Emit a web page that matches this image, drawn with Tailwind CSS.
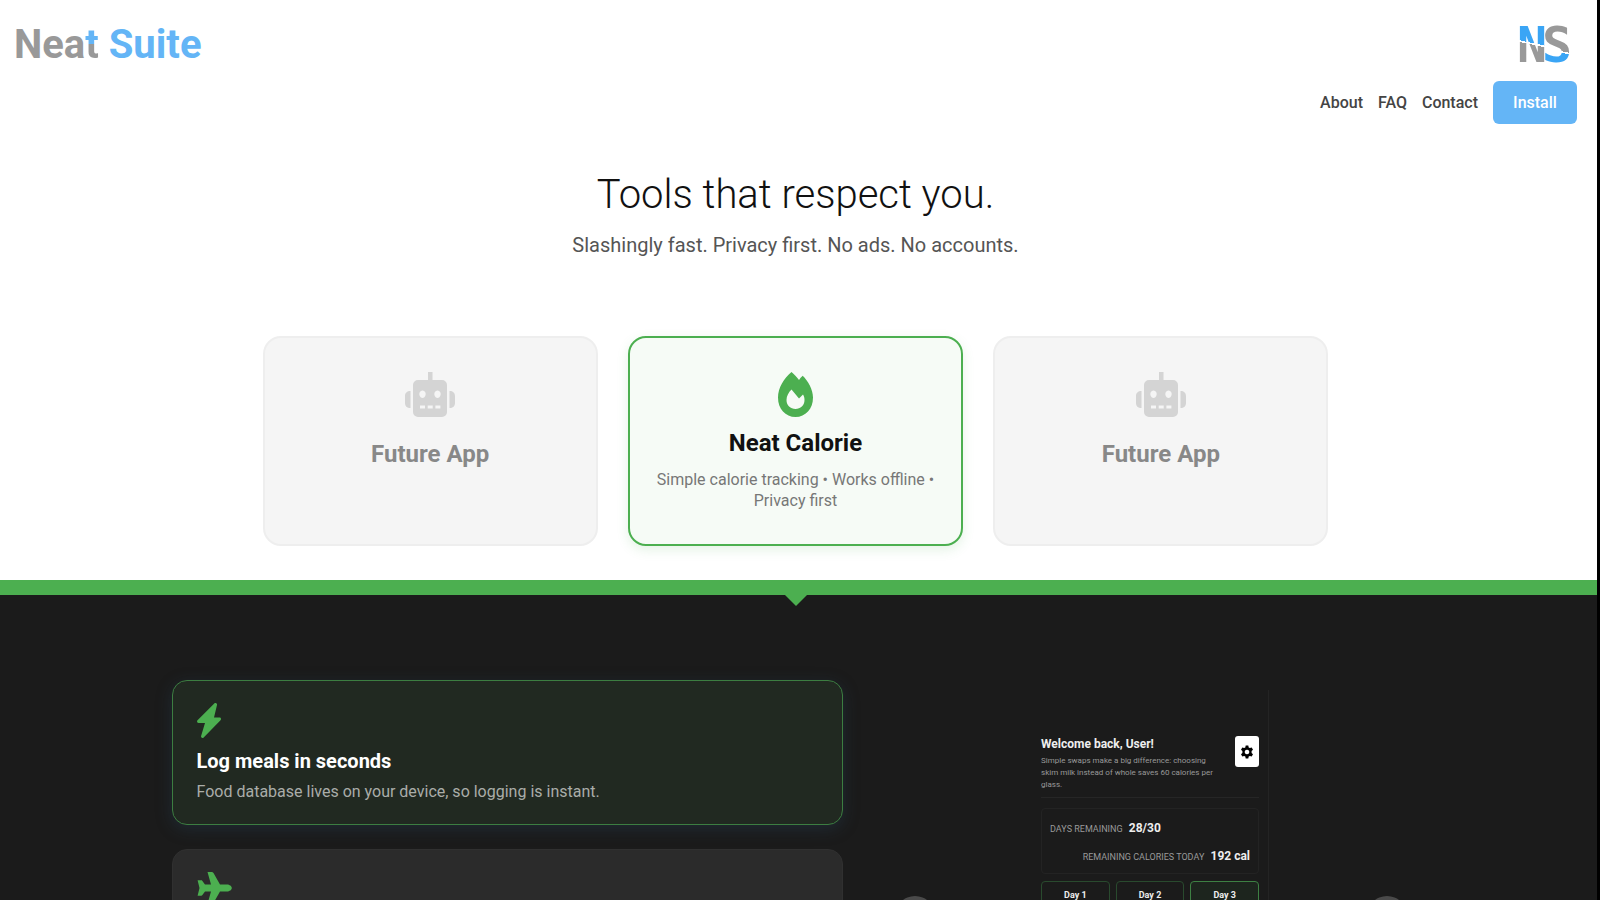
<!DOCTYPE html>
<html lang="en">
<head>
<meta charset="UTF-8" />
<meta name="viewport" content="width=device-width, initial-scale=1.0" />
<title>Neat Suite</title>
<script src="https://cdn.jsdelivr.net/npm/@tailwindcss/browser@4"></script>
</head>
<body class="h-screen overflow-hidden bg-black pr-[3px] font-[Roboto,'Liberation_Sans',sans-serif]">

<div class="min-h-full bg-white pr-[6px]">

  <!-- Header -->
  <header class="flex items-start justify-between pl-[14px] pr-[14px] pt-[25px]">
    <a href="#" class="text-[40px] leading-10 font-bold text-[#999999]">Nea<span class="bg-linear-to-b from-[#64b5f6] from-48% to-[#999999] to-48% bg-clip-text text-transparent">t</span> <span class="text-[#64b5f6]">Suite</span></a>
    <div class="flex flex-col items-end">
      <a href="#" aria-label="Neat Suite home" class="mr-[6px]">
        <svg class="w-[52px] h-10 overflow-visible" viewBox="0 0 52 40">
          <defs>
            <linearGradient id="n-fill" gradientUnits="userSpaceOnUse" x1="25" y1="1" x2="17" y2="39">
              <stop offset=".49" stop-color="#3aa5f5" />
              <stop offset=".49" stop-color="#fff" />
              <stop offset=".53" stop-color="#fff" />
              <stop offset=".53" stop-color="#999" />
            </linearGradient>
            <linearGradient id="s-fill" gradientUnits="userSpaceOnUse" x1="25" y1="1" x2="17" y2="39">
              <stop offset=".54" stop-color="#999" />
              <stop offset=".54" stop-color="#fff" />
              <stop offset=".58" stop-color="#fff" />
              <stop offset=".58" stop-color="#3aa5f5" />
            </linearGradient>
          </defs>
          <text x="-2" y="37" font-family="DejaVu Sans Mono, monospace" font-weight="700" font-size="50" fill="url(#n-fill)">N</text>
          <text x="23" y="37" font-family="DejaVu Sans Mono, monospace" font-weight="700" font-size="50" fill="url(#s-fill)">S</text>
        </svg>
      </a>
      <nav class="mt-4 flex items-center gap-[15px] text-base font-medium text-[#444]">
        <a href="#about">About</a>
        <a href="#faq">FAQ</a>
        <a href="#contact">Contact</a>
        <button class="h-[43px] w-[84px] rounded-md bg-[#64b5f6] text-white">Install</button>
      </nav>
    </div>
  </header>

  <!-- Hero -->
  <section class="pt-[43px] text-center">
    <h1 class="text-[40px] leading-[56px] font-light text-[#111]">Tools that respect you.</h1>
    <p class="mt-2 text-xl leading-7 text-[#555]">Slashingly fast. Privacy first. No ads. No accounts.</p>
  </section>

  <!-- Apps -->
  <section class="mx-auto mt-[77px] grid w-[67%] max-w-[1066px] grid-cols-3 gap-[30px] text-center">
    <div class="flex flex-col items-center rounded-[18px] border-2 border-[#eeeeee] bg-[#f5f5f5] pt-[34px]">
      <svg class="w-[50px] h-[45px] fill-[#d4d4d4]" viewBox="0 0 50 45">
        <path fill-rule="evenodd" d="M23 0h4.500v8H37a5 5 0 0 1 5 5v27a5 5 0 0 1-5 5H13a5 5 0 0 1-5-5V13a5 5 0 0 1 5-5h10zM17.500 18.500a3.200 3.700 0 1 0 .01 0zM32.500 18.500a3.200 3.700 0 1 0 .01 0zM15 33.500v3h5v-3zM22.700 33.500v3h5v-3zM30.400 33.500v3h5v-3z" />
        <path d="M5.500 19v17C2 36 0 34 0 31v-7c0-3 2-5 5.500-5zM44.500 19v17c3.500 0 5.500-2 5.500-5v-7c0-3-2-5-5.500-5z" />
      </svg>
      <h2 class="mt-[21px] text-[24px] leading-8 font-bold text-[#888]">Future App</h2>
    </div>
    <div class="flex flex-col items-center rounded-[18px] border-2 border-[#4caf50] bg-[#f6fbf6] px-5 pt-[34px] pb-[33px] shadow-[0_4px_12px_rgba(76,175,80,0.15)]">
      <svg class="w-[35px] h-[45px] fill-[#4caf50]" viewBox="0 0 35 45">
        <path fill-rule="evenodd" d="M13.500 0c3 2.500 5.500 5.500 7.500 8 1-1.600 2.200-3 3.700-4.200C30 9 35 17.500 35 25.500 35 37 27.500 45 17.500 45S0 37 0 25.500C0 16 6 6 13.500 0zM13.500 17.500C10.500 20.500 8.500 24 8.500 28c0 5.500 4 9 9 9s9-3.500 9-9c0-2-.5-4-1.500-5.500l-4 4z" />
      </svg>
      <h2 class="mt-[10px] text-[24px] leading-8 font-bold text-[#111]">Neat Calorie</h2>
      <p class="mt-[10px] text-base leading-[21px] text-[#777]">Simple calorie tracking • Works offline • Privacy first</p>
    </div>
    <div class="flex flex-col items-center rounded-[18px] border-2 border-[#eeeeee] bg-[#f5f5f5] pt-[34px]">
      <svg class="w-[50px] h-[45px] fill-[#d4d4d4]" viewBox="0 0 50 45">
        <path fill-rule="evenodd" d="M23 0h4.500v8H37a5 5 0 0 1 5 5v27a5 5 0 0 1-5 5H13a5 5 0 0 1-5-5V13a5 5 0 0 1 5-5h10zM17.500 18.500a3.200 3.700 0 1 0 .01 0zM32.500 18.500a3.200 3.700 0 1 0 .01 0zM15 33.500v3h5v-3zM22.700 33.500v3h5v-3zM30.400 33.500v3h5v-3z" />
        <path d="M5.500 19v17C2 36 0 34 0 31v-7c0-3 2-5 5.500-5zM44.500 19v17c3.500 0 5.500-2 5.500-5v-7c0-3-2-5-5.500-5z" />
      </svg>
      <h2 class="mt-[21px] text-[24px] leading-8 font-bold text-[#888]">Future App</h2>
    </div>
  </section>

  <!-- Neat Calorie details -->
  <section class="-mr-[6px] mt-[34px] border-t-[15px] border-[#4caf50] bg-[#1b1b1b] pr-[6px]">
    <svg class="mx-auto w-[22px] h-[11px] fill-[#4caf50]" viewBox="0 0 22 11"><path d="M0 0h22L11 11z" /></svg>
    <div class="mx-auto mt-[74px] grid w-4/5 max-w-[1248px] grid-cols-[5fr_4fr] gap-10">

      <div class="flex flex-col gap-6">
        <article class="rounded-[15px] border border-[#3c7d41] bg-[#212921] px-6 pt-[22px] pb-5 shadow-[0_4px_16px_rgba(40,70,95,0.35)]">
          <svg class="w-[24px] h-[35px] fill-[#4caf50]" viewBox="0 0 24 35">
            <path d="M17.500.3c1.200-.8 2.800.2 2.500 1.600L17 14.500h5.500c1.500 0 2 1.700 1 2.700L6.700 34.400c-1.200 1.200-3 .3-2.600-1.300L8 20H1.500C.1 20-.4 18.400.5 17.300z" />
          </svg>
          <h3 class="mt-[9px] text-xl leading-7 font-bold text-white">Log meals in seconds</h3>
          <p class="mt-[5px] text-base leading-6 text-[#aaada9]">Food database lives on your device, so logging is instant.</p>
        </article>
        <article class="rounded-[15px] border border-[#303030] bg-[#2b2b2b] px-6 pt-[22px] pb-5">
          <svg class="w-[35px] h-[32px] fill-[#4caf50]" viewBox="0 0 35 32">
            <path d="M10.500 0h4.200c.8 0 1.400.4 1.800 1l6.500 11.500h7c2.500 0 4.800 1.700 4.800 3.500s-2.300 3.500-4.800 3.500h-7L16.500 31c-.4.600-1 1-1.800 1h-4.200l3.500-12.500H8L5.200 23.300c-.2.300-.5.400-.9.400H.6L2.500 16 .6 8.300h3.700c.4 0 .7.100.9.400L8 12.500h6z" />
          </svg>
        </article>
      </div>

      <!-- Phone preview -->
      <div class="flex items-start justify-center gap-[98px] pt-[10px] text-white">
        <button aria-label="Previous" class="mt-[206px] size-[40px] shrink-0 rounded-full bg-[#4a4a4a]"></button>
        <div class="w-[236px] shrink-0 border-r border-[#242424] pt-[46px] pr-[9px] pl-[8px]">
          <div class="flex items-start justify-between border-b border-[#262626] pb-[6px]">
            <div>
              <h4 class="text-xs leading-4 font-bold text-[#eee]">Welcome back, User!</h4>
              <p class="mt-[3px] w-[178px] text-[8px] leading-3 text-[#999]">Simple swaps make a big difference: choosing skim milk instead of whole saves 60 calories per glass.</p>
            </div>
            <button aria-label="Settings" class="flex h-[31px] w-[24px] items-center justify-center rounded-[3px] bg-white">
              <svg class="size-[14px]" viewBox="0 0 14 14">
                <path fill-rule="evenodd" d="M5.700.5h2.600l.4 1.900 1.200.7 1.800-.6 1.300 2.300-1.400 1.300v1.800l1.400 1.300-1.300 2.300-1.800-.6-1.200.7-.4 1.900H5.700l-.4-1.900-1.200-.7-1.800.6L1 9.200l1.400-1.300V6.100L1 4.800l1.300-2.300 1.800.6 1.200-.7zM7 4.700a2.300 2.300 0 1 0 .01 0z" />
              </svg>
            </button>
          </div>
          <div class="mt-[10px] flex h-[66px] flex-col justify-between rounded border border-[#232323] px-2 pt-[11px] pb-2 text-[#999]">
            <p class="text-[9px] leading-4">DAYS REMAINING <b class="ml-1 text-xs leading-4 text-[#eee]">28/30</b></p>
            <p class="text-right text-[9px] leading-4">REMAINING CALORIES TODAY <b class="ml-1 text-xs leading-4 text-[#eee]">192 cal</b></p>
          </div>
          <div class="mt-[7px] grid grid-cols-3 gap-[6px] text-[9px] leading-3 font-bold text-[#eee]">
            <button class="h-12 rounded border border-[#294a2e] pb-5">Day 1</button>
            <button class="h-12 rounded border border-[#294a2e] pb-5">Day 2</button>
            <button class="h-12 rounded border border-[#3d8043] bg-[#1d251e] pb-5">Day 3</button>
          </div>
        </div>
        <button aria-label="Next" class="mt-[206px] size-[40px] shrink-0 rounded-full bg-[#4a4a4a]"></button>
      </div>
    </div>
  </section>
</div>

</body>
</html>
